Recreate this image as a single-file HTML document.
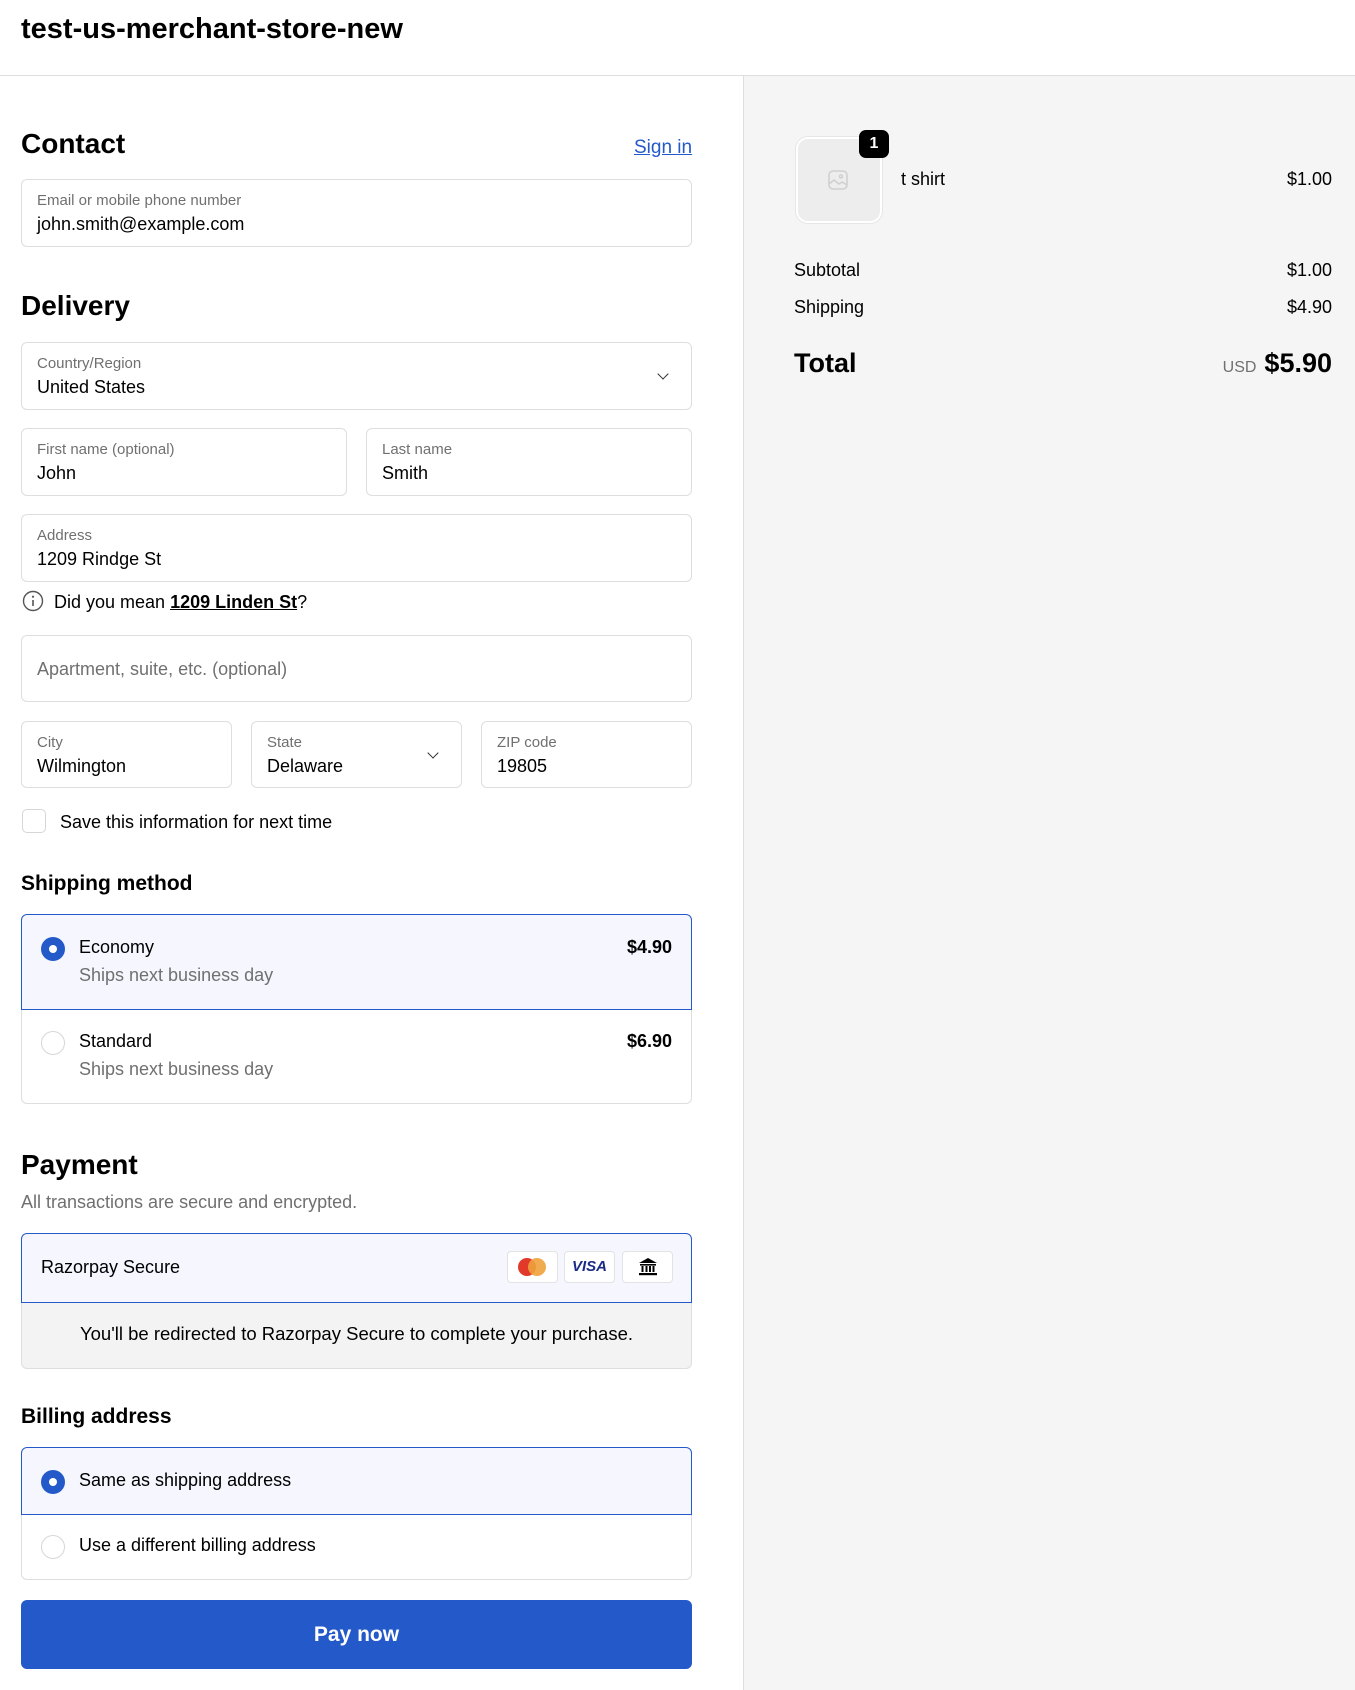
<!DOCTYPE html>
<html><head><meta charset="utf-8"><style>
*{box-sizing:border-box;margin:0;padding:0}
body{width:1355px;height:1690px;position:relative;font-family:"Liberation Sans",Arial,sans-serif;color:#000;background:#fff;overflow:hidden}
.a{position:absolute}
.f{position:absolute;border:1px solid #dedede;border-radius:6px;background:#fff}
.lbl{position:absolute;left:15px;top:12px;font-size:15px;color:#707070}
.val{position:absolute;left:15px;top:34px;font-size:18px}
.h2{position:absolute;left:21px;font-size:28px;font-weight:bold}
.h3{position:absolute;left:21px;font-size:21px;font-weight:bold}
.chev{position:absolute;width:8px;height:8px;border-right:1.7px solid #333;border-bottom:1.7px solid #333;transform:rotate(45deg)}
.rad{position:absolute;width:24px;height:24px;border-radius:50%}
.on{background:#2359c9}
.on:after{content:"";position:absolute;left:8px;top:8px;width:8px;height:8px;border-radius:50%;background:#fff}
.off{border:1px solid #d6d6d6;background:#fff}
.t18{font-size:18px}
.gray{color:#707070}
.sel{position:absolute;left:21px;width:671px;background:#f5f6fe;border:1px solid #2359c9;border-radius:6px 6px 0 0}
.bot{position:absolute;left:21px;width:671px;border:1px solid #dedede;border-top:none;border-radius:0 0 6px 6px}
</style></head><body>
<div class="a" style="left:21px;top:13px;font-size:29px;font-weight:bold">test-us-merchant-store-new</div>
<div class="a" style="left:0;top:75px;width:1355px;height:1px;background:#dedede"></div>
<div class="a" style="left:743px;top:76px;width:612px;height:1614px;background:#f5f5f5;border-left:1px solid #dedede"></div>

<div class="h2" style="top:128px">Contact</div>
<div class="a" style="left:634px;top:137px;font-size:19px;color:#2359c9;text-decoration:underline">Sign in</div>
<div class="f" style="left:21px;top:179px;width:671px;height:68px"><div class="lbl">Email or mobile phone number</div><div class="val">john.smith@example.com</div></div>

<div class="h2" style="top:290px">Delivery</div>
<div class="f" style="left:21px;top:342px;width:671px;height:68px"><div class="lbl">Country/Region</div><div class="val">United States</div><div class="chev" style="right:24px;top:27px"></div></div>
<div class="f" style="left:21px;top:428px;width:326px;height:68px"><div class="lbl">First name (optional)</div><div class="val">John</div></div>
<div class="f" style="left:366px;top:428px;width:326px;height:68px"><div class="lbl">Last name</div><div class="val">Smith</div></div>
<div class="f" style="left:21px;top:514px;width:671px;height:68px"><div class="lbl">Address</div><div class="val">1209 Rindge St</div></div>
<svg class="a" style="left:22px;top:590px" width="22" height="22" viewBox="0 0 22 22"><circle cx="11" cy="11" r="9.5" fill="none" stroke="#555" stroke-width="1.4"/><line x1="11" y1="10" x2="11" y2="16" stroke="#555" stroke-width="1.6"/><circle cx="11" cy="6.7" r="1.1" fill="#555"/></svg>
<div class="a t18" style="left:54px;top:592px">Did you mean <b style="text-decoration:underline">1209 Linden St</b>?</div>
<div class="f" style="left:21px;top:635px;width:671px;height:67px"><div class="a gray t18" style="left:15px;top:23px">Apartment, suite, etc. (optional)</div></div>
<div class="f" style="left:21px;top:721px;width:211px;height:67px"><div class="lbl">City</div><div class="val">Wilmington</div></div>
<div class="f" style="left:251px;top:721px;width:211px;height:67px"><div class="lbl">State</div><div class="val">Delaware</div><div class="chev" style="right:24px;top:27px"></div></div>
<div class="f" style="left:481px;top:721px;width:211px;height:67px"><div class="lbl">ZIP code</div><div class="val">19805</div></div>
<div class="a" style="left:22px;top:809px;width:24px;height:24px;border:1px solid #d6d6d6;border-radius:5px"></div>
<div class="a t18" style="left:60px;top:812px">Save this information for next time</div>

<div class="h3" style="top:872px">Shipping method</div>
<div class="sel" style="top:914px;height:96px"></div>
<div class="bot" style="top:1010px;height:94px"></div>
<div class="rad on" style="left:41px;top:937px"></div>
<div class="a t18" style="left:79px;top:937px">Economy</div>
<div class="a t18 gray" style="left:79px;top:965px">Ships next business day</div>
<div class="a t18" style="left:560px;width:112px;text-align:right;top:937px;font-weight:bold">$4.90</div>
<div class="rad off" style="left:41px;top:1031px"></div>
<div class="a t18" style="left:79px;top:1031px">Standard</div>
<div class="a t18 gray" style="left:79px;top:1059px">Ships next business day</div>
<div class="a t18" style="left:560px;width:112px;text-align:right;top:1031px;font-weight:bold">$6.90</div>

<div class="h2" style="top:1149px">Payment</div>
<div class="a t18 gray" style="left:21px;top:1192px">All transactions are secure and encrypted.</div>
<div class="sel" style="top:1233px;height:70px"></div>
<div class="bot" style="top:1303px;height:66px;background:#f3f3f3"></div>
<div class="a t18" style="left:41px;top:1257px">Razorpay Secure</div>
<div class="a" style="left:507px;top:1251px;width:51px;height:32px;background:#fff;border:1px solid #e3e3e3;border-radius:4px"><div class="a" style="left:10px;top:6px;width:18px;height:18px;border-radius:50%;background:#e23a2a"></div><div class="a" style="left:20px;top:6px;width:18px;height:18px;border-radius:50%;background:#f0a23c;opacity:.9"></div></div>
<div class="a" style="left:564px;top:1251px;width:51px;height:32px;background:#fff;border:1px solid #e3e3e3;border-radius:4px;text-align:center;font:italic bold 15px/30px 'Liberation Sans',sans-serif;color:#1a2b85">VISA</div>
<div class="a" style="left:622px;top:1251px;width:51px;height:32px;background:#fff;border:1px solid #e3e3e3;border-radius:4px"><svg class="a" style="left:15px;top:5px" width="20" height="20" viewBox="0 0 20 20"><path d="M10 1L1 6h18z" fill="#000"/><rect x="2" y="7" width="16" height="1.6"/><rect x="3.5" y="9" width="2" height="6"/><rect x="7.5" y="9" width="2" height="6"/><rect x="11" y="9" width="2" height="6"/><rect x="14.5" y="9" width="2" height="6"/><rect x="1" y="16" width="18" height="2.2"/></svg></div>
<div class="a" style="left:21px;width:671px;top:1323px;text-align:center;font-size:18.5px">You'll be redirected to Razorpay Secure to complete your purchase.</div>

<div class="h3" style="top:1405px">Billing address</div>
<div class="sel" style="top:1447px;height:68px"></div>
<div class="bot" style="top:1515px;height:65px"></div>
<div class="rad on" style="left:41px;top:1470px"></div>
<div class="a t18" style="left:79px;top:1470px">Same as shipping address</div>
<div class="rad off" style="left:41px;top:1535px"></div>
<div class="a t18" style="left:79px;top:1535px">Use a different billing address</div>
<div class="a" style="left:21px;top:1600px;width:671px;height:69px;background:#2359c9;border-radius:6px;color:#fff;font-size:21px;font-weight:bold;text-align:center;line-height:69px">Pay now</div>

<div class="a" style="left:796px;top:137px;width:86px;height:86px;background:#ededed;border:2px solid #fff;border-radius:12px;box-shadow:0 0 0 1px #e6e6e6"></div>
<svg class="a" style="left:827px;top:169px" width="22" height="22" viewBox="0 0 22 22" fill="none" stroke="#d0d0d0" stroke-width="1.6"><rect x="2" y="2" width="18" height="18" rx="4"/><path d="M2 15l5-4 5 4 3-2 5 3"/><circle cx="14" cy="7.5" r="1.5"/></svg>
<div class="a" style="left:859px;top:130px;width:30px;height:28px;background:#000;border-radius:7px;color:#fff;font-size:16px;font-weight:bold;text-align:center;line-height:28px">1</div>
<div class="a t18" style="left:901px;top:169px">t shirt</div>
<div class="a t18" style="right:23px;top:169px">$1.00</div>
<div class="a t18" style="left:794px;top:260px">Subtotal</div>
<div class="a t18" style="right:23px;top:260px">$1.00</div>
<div class="a t18" style="left:794px;top:297px">Shipping</div>
<div class="a t18" style="right:23px;top:297px">$4.90</div>
<div class="a" style="left:794px;top:348px;font-size:27px;font-weight:bold">Total</div>
<div class="a" style="right:23px;top:348px;font-size:27px;font-weight:bold"><span style="font-size:16px;font-weight:normal;color:#707070;margin-right:8px">USD</span>$5.90</div>
</body></html>
